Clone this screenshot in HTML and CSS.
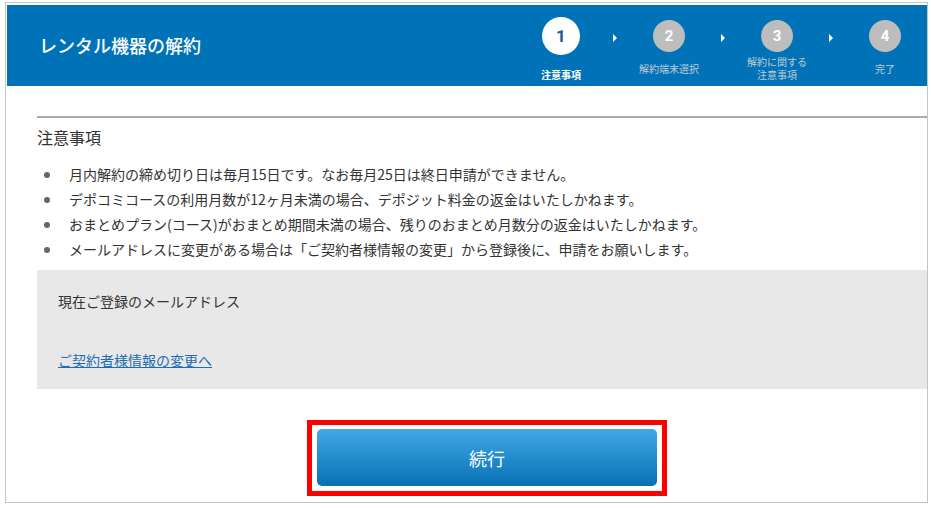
FILE: index.html
```html
<!DOCTYPE html>
<html lang="ja">
<head>
  <meta charset="UTF-8">
  <meta name="viewport" content="width=device-width, initial-scale=1.0">
  <title>レンタル機器の解約</title>
  <link rel="stylesheet" href="styles.css">
</head>
<body>
  <div class="frame">
    <header class="page-header">
      <h1>レンタル機器の解約</h1>
      <ol class="steps">
        <li class="step active">
          <div class="step-circle"><span>1</span></div>
          <div class="step-label">注意事項</div>
        </li>
        <li class="step-arrow"></li>
        <li class="step">
          <div class="step-circle"><span>2</span></div>
          <div class="step-label">解約端末選択</div>
        </li>
        <li class="step-arrow"></li>
        <li class="step">
          <div class="step-circle"><span>3</span></div>
          <div class="step-label">解約に関する<br>注意事項</div>
        </li>
        <li class="step-arrow"></li>
        <li class="step">
          <div class="step-circle"><span>4</span></div>
          <div class="step-label">完了</div>
        </li>
      </ol>
    </header>

    <main class="main">
      <div class="content">
        <h2 class="section-title">注意事項</h2>
        <ul class="notes">
          <li>月内解約の締め切り日は毎月15日です。なお毎月25日は終日申請ができません。</li>
          <li>デポコミコースの利用月数が12ヶ月未満の場合、デポジット料金の返金はいたしかねます。</li>
          <li>おまとめプラン(コース)がおまとめ期間未満の場合、残りのおまとめ月数分の返金はいたしかねます。</li>
          <li>メールアドレスに変更がある場合は「ご契約者様情報の変更」から登録後に、申請をお願いします。</li>
        </ul>

        <div class="mail-box">
          <p class="mail-label">現在ご登録のメールアドレス</p>
          <p class="mail-value"></p>
          <a href="#" class="mail-link">ご契約者様情報の変更へ</a>
        </div>

        <div class="actions">
          <div class="highlight">
            <button class="next-btn">続行</button>
          </div>
        </div>
      </div>
    </main>
  </div>
</body>
</html>
```

FILE: styles.css
```css
body {
  margin: 0;
  font-family: "Noto Sans CJK JP", "Noto Sans", sans-serif;
  color: #333;
  background: #fff;
}
.frame {
  margin: 2px 0 0 5px;
  width: 920px;
  height: 497px;
  border: 1px solid #c4c4c4;
  padding: 2px 0 0 1px;
  overflow: hidden;
}
.page-header {
  background: #0072b8;
  height: 81px;
  display: flex;
  align-items: flex-start;
  justify-content: space-between;
}
.page-header h1 {
  margin: 0;
  padding: 28px 0 0 32px;
  color: #fff;
  font-size: 18px;
  font-weight: 500;
  line-height: 24px;
}
.steps {
  list-style: none;
  margin: 0;
  padding: 0 2px 0 0;
  display: flex;
}
.step {
  width: 80px;
  display: flex;
  flex-direction: column;
  align-items: center;
}
.step-circle {
  height: 38px;
  margin-top: 12px;
  display: flex;
  align-items: center;
}
.step-circle span {
  width: 32px;
  height: 32px;
  border-radius: 50%;
  background: #bdbdbd;
  color: #fff;
  font-family: Roboto, "Liberation Sans", sans-serif;
  font-weight: bold;
  font-size: 15px;
  display: flex;
  align-items: center;
  justify-content: center;
}
.step.active .step-circle span {
  width: 38px;
  height: 38px;
  background: #fff;
  color: #1b5c91;
  font-size: 17px;
}
.step-label {
  margin-top: 0;
  height: 26px;
  display: flex;
  align-items: center;
  text-align: center;
  color: #c2cad3;
  font-size: 10px;
  line-height: 13px;
}
.step.active .step-label {
  color: #fff;
  font-weight: bold;
  padding-top: 6px;
}
.step-arrow {
  width: 28px;
  height: 38px;
  margin-top: 12px;
  display: flex;
  align-items: center;
  justify-content: center;
}
.step-arrow::before {
  content: "";
  border-left: 4px solid #fff;
  border-top: 4px solid transparent;
  border-bottom: 4px solid transparent;
  margin-top: 4px;
}
.main {
  padding: 30px 0 0 30px;
}
.content {
  width: 900px;
  border-top: 2px solid #aaa;
}
.section-title {
  margin: 7px 0 0;
  font-size: 16px;
  font-weight: normal;
  line-height: 24px;
  color: #333;
}
.notes {
  list-style: none;
  margin: 13px 0 0;
  padding: 0;
}
.notes li {
  display: flex;
  align-items: center;
  font-size: 14px;
  line-height: 25px;
  padding-left: 7px;
}
.notes li::before {
  content: "";
  width: 6px;
  height: 6px;
  border-radius: 50%;
  background: #666;
  margin-right: 19px;
  flex-shrink: 0;
}
.mail-box {
  margin-top: 8px;
  background: #e8e8e8;
  padding: 19px 21px 17px;
  font-size: 14px;
  line-height: 24px;
}
.mail-box p {
  margin: 0;
}
.mail-value {
  height: 35px;
}
.mail-link {
  color: #1f6db0;
}
.actions {
  display: flex;
  justify-content: center;
  padding-top: 31px;
}
.highlight {
  border: 5px solid #f00;
  padding: 4px 5px 5px;
}
.next-btn {
  display: block;
  width: 340px;
  height: 57px;
  border: none;
  border-radius: 5px;
  background: linear-gradient(#43a9e5, #0670b5);
  color: #fff;
  font-family: "Noto Sans CJK JP", sans-serif;
  font-size: 18px;
  cursor: pointer;
}
```
